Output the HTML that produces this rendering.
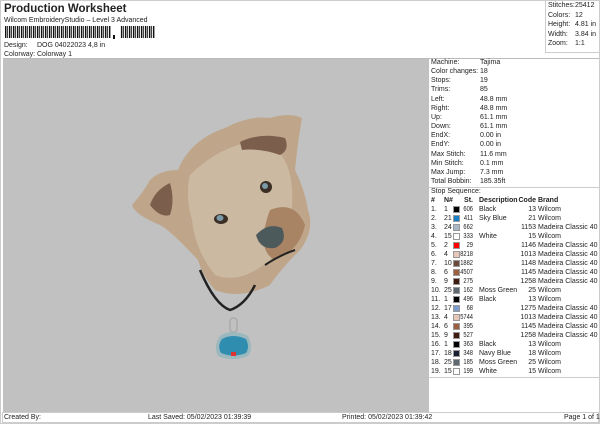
<!DOCTYPE html>
<html><head><meta charset="utf-8"><style>
*{margin:0;padding:0;box-sizing:border-box}
body{width:600px;height:424px;background:#fff;font-family:"Liberation Sans",sans-serif;color:#222;position:relative;overflow:hidden;font-size:7px}
.a{position:absolute;white-space:nowrap;line-height:9px}
#gray{position:absolute;left:3px;top:59px;width:426px;height:353px;background:#c1c1c1}
.r{position:absolute;left:431px;font-size:7px;line-height:9px;white-space:nowrap}
.row{position:absolute;left:431px;width:168px;height:9px;line-height:9px;font-size:7px;white-space:nowrap}
.row span{position:absolute;top:0}
.c1{left:0}.c2{left:13px}.c4{left:22px;width:20px;text-align:right;transform:scaleX(.82);transform-origin:right center}.c5{left:48px}.c6{left:83px;width:22px;text-align:right}.c7{left:107px}
.sw{position:absolute;left:22px;top:1px;width:7px;height:7px;border:1px solid #999}
</style></head><body>
<div style="position:absolute;left:0;top:0;width:600px;height:424px;border:1px solid #ccc"></div>
<div class="a" style="left:4px;top:2px;font-size:11.5px;font-weight:bold;line-height:14px">Production Worksheet</div>
<div class="a" style="left:4px;top:16px">Wilcom EmbroideryStudio – Level 3 Advanced</div>
<svg style="position:absolute;left:5px;top:26px" width="150" height="13">
<rect x="0" y="0" width="106" height="12" fill="url(#bc)"/>
<rect x="115" y="0" width="35" height="12" fill="url(#bc)"/>
<rect x="108" y="9" width="2" height="4" fill="#111"/>
<defs><pattern id="bc" width="4" height="12" patternUnits="userSpaceOnUse"><rect width="1.4" height="12" fill="#111"/><rect x="2.2" width="0.9" height="12" fill="#111"/></pattern></defs>
</svg>
<div class="a" style="left:4px;top:41px">Design:</div><div class="a" style="left:37px;top:41px">DOG 04022023 4,8 in</div>
<div class="a" style="left:4px;top:50px">Colorway:</div><div class="a" style="left:37px;top:50px">Colorway 1</div>
<div style="position:absolute;left:545px;top:1px;width:54px;height:52px;border-left:1px solid #ccc;border-bottom:1px solid #ccc"></div>
<div class="a" style="left:548px;top:1px;line-height:9.5px">Stitches:<br>Colors:<br>Height:<br>Width:<br>Zoom:</div>
<div class="a" style="left:575px;top:1px;line-height:9.5px">25412<br>12<br>4.81 in<br>3.84 in<br>1:1</div>
<div id="gray"></div>
<div style="position:absolute;left:3px;top:58px;width:596px;border-top:1px solid #bbb"></div>
<svg style="position:absolute;left:130px;top:100px" width="200" height="300" viewBox="0 0 200 300">
<path d="M48 70 Q60 40 95 28 Q120 15 140 18 Q160 12 172 18 Q168 40 165 70 Q175 90 178 110 Q185 130 170 150 Q150 170 140 185 Q110 200 85 190 Q72 175 68 160 Q40 130 30 125 Q5 115 2 105 Q15 90 20 80 Q30 70 48 70Z" fill="#bfa68a"/>
<path d="M60 75 Q90 45 130 40 Q160 50 162 90 Q165 130 140 160 Q110 185 85 175 Q65 150 62 120 Q55 95 60 75Z" fill="#cbb9a2"/>
<path d="M110 42 Q130 32 155 38 Q160 50 150 55 Q130 48 112 50Z" fill="#7b5f4c"/>
<path d="M20 105 Q25 90 40 83 Q45 100 40 115 Q30 118 20 105Z" fill="#7b5f4c"/>
<path d="M140 110 Q165 100 175 125 Q170 150 145 160 Q125 150 140 110Z" fill="#a88464"/>
<ellipse cx="91" cy="119" rx="7" ry="5" fill="#3a2e25"/><ellipse cx="90" cy="118" rx="3.5" ry="3" fill="#7a9aa8"/>
<ellipse cx="136" cy="87" rx="6" ry="6" fill="#3a2e25"/><ellipse cx="135" cy="86" rx="3" ry="3" fill="#7a9aa8"/>
<path d="M126 135 Q138 122 152 128 Q158 142 145 148 Q130 150 126 135Z" fill="#4d5a5c"/>
<path d="M135 165 Q150 155 165 150" stroke="#222" stroke-width="2" fill="none"/>
<path d="M70 170 Q85 205 100 210 Q115 205 125 185" stroke="#222" stroke-width="2.5" fill="none"/>
<rect x="100" y="218" width="7" height="14" rx="3" fill="none" stroke="#aaa" stroke-width="1.5"/>
<path d="M90 236 Q102 228 118 236 Q124 248 118 256 Q102 262 88 256 Q83 246 90 236Z" fill="#9ab8be"/>
<path d="M92 239 Q103 233 116 239 Q120 247 116 253 Q103 258 91 253 Q87 246 92 239Z" fill="#2f8db0"/>
<rect x="101" y="252" width="5" height="4" fill="#d33"/>
</svg>
<div class="r" style="top:58px;line-height:9.15px">Machine:<br>Color changes:<br>Stops:<br>Trims:<br>Left:<br>Right:<br>Up:<br>Down:<br>EndX:<br>EndY:<br>Max Stitch:<br>Min Stitch:<br>Max Jump:<br>Total Bobbin:</div>
<div class="r" style="top:58px;left:480px;line-height:9.15px">Tajima<br>18<br>19<br>85<br>48.8 mm<br>48.8 mm<br>61.1 mm<br>61.1 mm<br>0.00 in<br>0.00 in<br>11.6 mm<br>0.1 mm<br>7.3 mm<br>185.35ft</div>
<div style="position:absolute;left:429px;top:187px;width:170px;border-top:1px solid #ccc"></div>
<div class="r" style="top:187px">Stop Sequence:</div>
<div class="row" style="top:196px;font-weight:bold;text-decoration:underline"><span class="c1">#</span><span class="c2">N#</span><span class="c4" style="transform:none">St.</span><span class="c5">Description</span><span class="c6">Code</span><span class="c7">Brand</span></div>
<div class="row" style="top:205px"><span class="c1">1.</span><span class="c2">1</span><i class="sw" style="background:#000"></i><span class="c4">606</span><span class="c5">Black</span><span class="c6">13</span><span class="c7">Wilcom</span></div>
<div class="row" style="top:214px"><span class="c1">2.</span><span class="c2">21</span><i class="sw" style="background:#1a7fc4"></i><span class="c4">411</span><span class="c5">Sky Blue</span><span class="c6">21</span><span class="c7">Wilcom</span></div>
<div class="row" style="top:223px"><span class="c1">3.</span><span class="c2">24</span><i class="sw" style="background:#a9b8c8"></i><span class="c4">662</span><span class="c6">1153</span><span class="c7">Madeira Classic 40</span></div>
<div class="row" style="top:232px"><span class="c1">4.</span><span class="c2">15</span><i class="sw" style="background:#fff"></i><span class="c4">333</span><span class="c5">White</span><span class="c6">15</span><span class="c7">Wilcom</span></div>
<div class="row" style="top:241px"><span class="c1">5.</span><span class="c2">2</span><i class="sw" style="background:#f00"></i><span class="c4">29</span><span class="c6">1146</span><span class="c7">Madeira Classic 40</span></div>
<div class="row" style="top:250px"><span class="c1">6.</span><span class="c2">4</span><i class="sw" style="background:#e8c7b8"></i><span class="c4">8218</span><span class="c6">1013</span><span class="c7">Madeira Classic 40</span></div>
<div class="row" style="top:259px"><span class="c1">7.</span><span class="c2">10</span><i class="sw" style="background:#6b4a3e"></i><span class="c4">1882</span><span class="c6">1148</span><span class="c7">Madeira Classic 40</span></div>
<div class="row" style="top:268px"><span class="c1">8.</span><span class="c2">6</span><i class="sw" style="background:#9c6040"></i><span class="c4">4507</span><span class="c6">1145</span><span class="c7">Madeira Classic 40</span></div>
<div class="row" style="top:277px"><span class="c1">9.</span><span class="c2">9</span><i class="sw" style="background:#3e1c10"></i><span class="c4">275</span><span class="c6">1258</span><span class="c7">Madeira Classic 40</span></div>
<div class="row" style="top:286px"><span class="c1">10.</span><span class="c2">25</span><i class="sw" style="background:#5e6870"></i><span class="c4">162</span><span class="c5">Moss Green</span><span class="c6">25</span><span class="c7">Wilcom</span></div>
<div class="row" style="top:295px"><span class="c1">11.</span><span class="c2">1</span><i class="sw" style="background:#000"></i><span class="c4">496</span><span class="c5">Black</span><span class="c6">13</span><span class="c7">Wilcom</span></div>
<div class="row" style="top:304px"><span class="c1">12.</span><span class="c2">17</span><i class="sw" style="background:#7b9ccc"></i><span class="c4">68</span><span class="c6">1275</span><span class="c7">Madeira Classic 40</span></div>
<div class="row" style="top:313px"><span class="c1">13.</span><span class="c2">4</span><i class="sw" style="background:#e8c7b8"></i><span class="c4">5744</span><span class="c6">1013</span><span class="c7">Madeira Classic 40</span></div>
<div class="row" style="top:322px"><span class="c1">14.</span><span class="c2">6</span><i class="sw" style="background:#9c6040"></i><span class="c4">395</span><span class="c6">1145</span><span class="c7">Madeira Classic 40</span></div>
<div class="row" style="top:331px"><span class="c1">15.</span><span class="c2">9</span><i class="sw" style="background:#3e1c10"></i><span class="c4">527</span><span class="c6">1258</span><span class="c7">Madeira Classic 40</span></div>
<div class="row" style="top:340px"><span class="c1">16.</span><span class="c2">1</span><i class="sw" style="background:#000"></i><span class="c4">363</span><span class="c5">Black</span><span class="c6">13</span><span class="c7">Wilcom</span></div>
<div class="row" style="top:349px"><span class="c1">17.</span><span class="c2">18</span><i class="sw" style="background:#1a1f33"></i><span class="c4">348</span><span class="c5">Navy Blue</span><span class="c6">18</span><span class="c7">Wilcom</span></div>
<div class="row" style="top:358px"><span class="c1">18.</span><span class="c2">25</span><i class="sw" style="background:#5e6870"></i><span class="c4">185</span><span class="c5">Moss Green</span><span class="c6">25</span><span class="c7">Wilcom</span></div>
<div class="row" style="top:367px"><span class="c1">19.</span><span class="c2">15</span><i class="sw" style="background:#fff"></i><span class="c4">199</span><span class="c5">White</span><span class="c6">15</span><span class="c7">Wilcom</span></div>
<div style="position:absolute;left:429px;top:377px;width:170px;border-top:1px solid #ccc"></div>
<div style="position:absolute;left:2px;top:412px;width:597px;height:11px;border:1px solid #ccc"></div>
<div class="a" style="left:4px;top:413px">Created By:</div>
<div class="a" style="left:148px;top:413px">Last Saved: 05/02/2023 01:39:39</div>
<div class="a" style="left:342px;top:413px">Printed: 05/02/2023 01:39:42</div>
<div class="a" style="left:564px;top:413px">Page 1 of 1</div>
</body></html>
